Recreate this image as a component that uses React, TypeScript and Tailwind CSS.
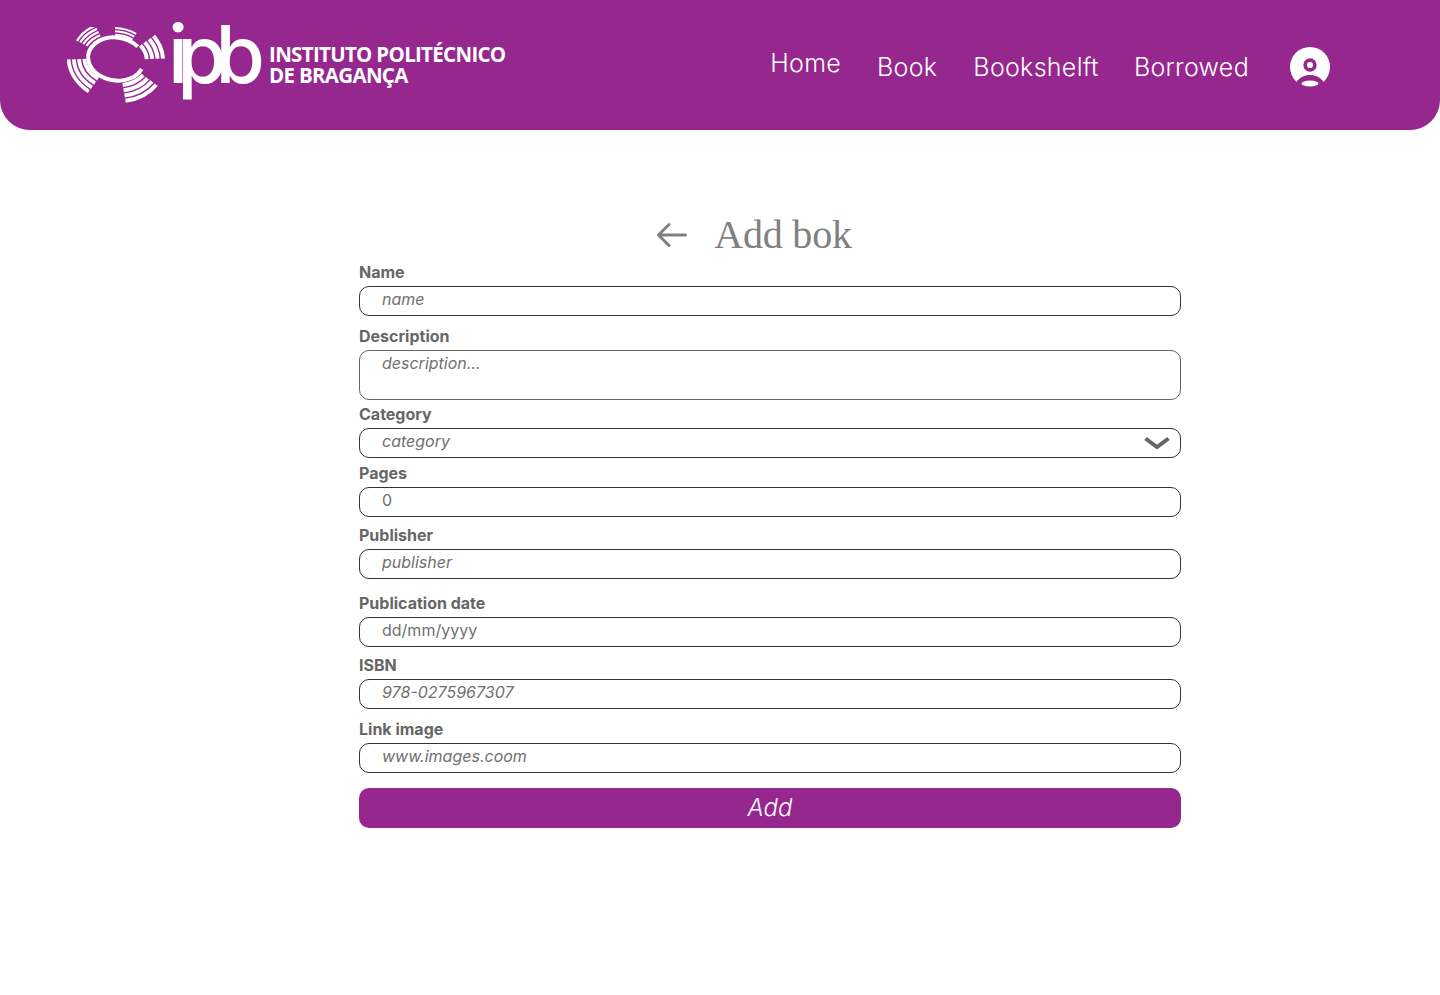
const inter = "font-['Inter',sans-serif]";

function arc(cx: number, cy: number, rx: number, ry: number, a0: number, a1: number) {
  const p = (a: number) => {
    const t = (a * Math.PI) / 180;
    return `${(cx + rx * Math.cos(t)).toFixed(2)} ${(cy + ry * Math.sin(t)).toFixed(2)}`;
  };
  const large = Math.abs(a1 - a0) > 180 ? 1 : 0;
  return `M${p(a0)} A${rx} ${ry} 0 ${large} 1 ${p(a1)}`;
}

const sectors = [
  { a0: 200, a1: 235, start: 5, n: 4, w: 2.2, gap: 1.4 },
  { a0: 262, a1: 296, start: 3, n: 3, w: 2, gap: 1.3 },
  { a0: 316, a1: 350, start: 3, n: 4, w: 4, gap: 1.4 },
  { a0: 28, a1: 72, start: 5, n: 4, w: 4, gap: 1.4 },
  { a0: 118, a1: 170, start: 4, n: 4, w: 3.8, gap: 1.4 },
];

function Emblem() {
  const cx = 115;
  const cy = 60;
  return (
    <svg width="100" height="76" viewBox="66 28 100 76" className="shrink-0" fill="none">
      <g transform="rotate(8 115 60)">
        <path d={arc(cx, cy, 28, 21.5, 17, 315)} stroke="#fff" strokeWidth="4" />
        {sectors.map((s) =>
          Array.from({ length: s.n }).map((_, i) => (
            <path
              key={`${s.a0}-${i}`}
              d={arc(cx, cy, 28 + s.start + i * (s.w + s.gap), 21.5 + s.start * 0.9 + i * (s.w + s.gap), s.a0, s.a1)}
              stroke="#fff"
              strokeWidth={s.w}
            />
          )),
        )}
      </g>
    </svg>
  );
}

function Logo() {
  return (
    <div className="flex items-center">
      <Emblem />
      <div className={`${inter} ml-[1px] mt-[-23px] pr-[10px] text-[80px] font-medium leading-[80px] tracking-[-11px] text-white`}>ipb</div>
      <div className="ml-[5px] mt-[-1px] font-['Open_Sans',sans-serif] text-[20.5px] font-bold leading-[21px] tracking-[-0.7px] text-white">
        <div>INSTITUTO POLITÉCNICO</div>
        <div>DE BRAGANÇA</div>
      </div>
    </div>
  );
}

function Field({
  label,
  placeholder,
  top,
  plain,
}: {
  label: string;
  placeholder: string;
  top: string;
  plain?: boolean;
}) {
  return (
    <label className={`block ${top}`}>
      <span className="mb-1 block h-5 text-base leading-5 font-bold text-[#666666]">{label}</span>
      <input
        readOnly
        placeholder={placeholder}
        className={`block h-[30px] w-full rounded-[10px] border border-[#333333] pb-[5px] pl-[22px] text-base font-normal text-[#707070] outline-none placeholder:text-[#707070] ${plain ? "" : "placeholder:italic"}`}
      />
    </label>
  );
}

export default function App() {
  return (
    <div className={`${inter} min-h-[995px] bg-white`}>
      <header className="flex h-[130px] items-center rounded-b-[30px] bg-[#95278e] pl-[67px] pr-[110px]">
        <Logo />
        <nav className="ml-auto mt-1 flex items-center text-[25px] font-light leading-8 tracking-[0.3px] text-white">
          <a className="mt-[-8px]">Home</a>
          <a className="ml-9">Book</a>
          <a className="ml-9">Bookshelft</a>
          <a className="ml-[35px]">Borrowed</a>
          <svg width="40" height="40" viewBox="0 0 40 40" className="ml-[41px]">
            <circle cx="20" cy="20" r="20" fill="#fff" />
            <circle cx="20" cy="18" r="4.9" fill="none" stroke="#95278e" strokeWidth="3.6" />
            <path d="M6.5 34.7C9.5 30.5 14.5 28 20 28s10.5 2.500 13.500 6.700L30 40H10z" fill="#95278e" />
            <ellipse cx="20" cy="36.500" rx="8.500" ry="3" fill="#fff" />
          </svg>
        </nav>
      </header>

      <main className="ml-[359px] w-[822px]">
        <div className="mb-[2px] mt-20 flex h-[50px] items-center justify-center pr-[32px]">
          <svg width="32" height="28" viewBox="0 0 32 28" fill="none" stroke="#808080" strokeWidth="3" strokeLinecap="round" strokeLinejoin="round">
            <path d="M29.500 14H3M13 3.500 2.500 14 13 24.500" />
          </svg>
          <h1 className="ml-[26px] font-['Liberation_Serif',serif] text-[40px] leading-[50px] tracking-[-0.2px] text-[#808080]">Add bok</h1>
        </div>

        <Field label="Name" placeholder="name" top="" />

        <label className="mt-[10px] block">
          <span className="mb-1 block h-5 text-base leading-5 font-bold text-[#666666]">Description</span>
          <textarea
            readOnly
            placeholder="description..."
            className="block h-[50px] w-full resize-none rounded-[10px] border border-[#666666] pl-[22px] text-base font-normal leading-6 outline-none placeholder:italic placeholder:text-[#707070]"
          />
        </label>

        <div className="mt-1">
          <span className="mb-1 block h-5 text-base leading-5 font-bold text-[#666666]">Category</span>
          <div className="flex h-[30px] items-center justify-between rounded-[10px] border border-[#333333] pb-[5px] pl-[22px] pr-[10px]">
            <span className="text-base font-normal italic text-[#707070]">category</span>
            <svg width="26" height="16" viewBox="0 0 26 16" fill="none" stroke="#666666" strokeWidth="4" className="mt-[5px]">
              <path d="M1.500 3.500 13 12l11.500-8.500" />
            </svg>
          </div>
        </div>

        <Field label="Pages" placeholder="0" top="mt-[5px]" plain />
        <Field label="Publisher" placeholder="publisher" top="mt-2" />
        <Field label="Publication date" placeholder="dd/mm/yyyy" top="mt-[14px]" plain />
        <Field label="ISBN" placeholder="978-0275967307" top="mt-2" />
        <Field label="Link image" placeholder="www.images.coom" top="mt-[10px]" />

        <button className="mt-[15px] block h-10 w-full rounded-[10px] bg-[#95278e] text-2xl font-light italic text-white">
          Add
        </button>
      </main>
    </div>
  );
}
